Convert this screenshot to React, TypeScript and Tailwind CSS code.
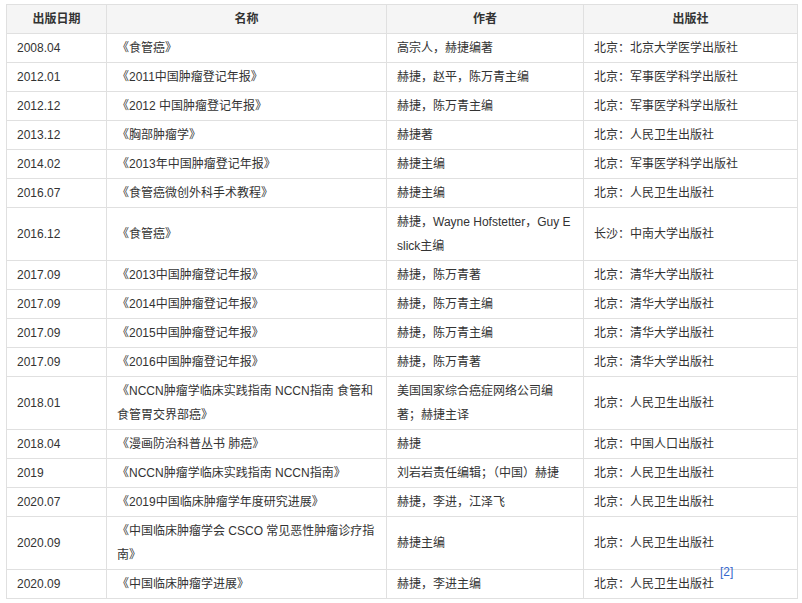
const rows: [string, string, string, string, boolean?][] = [
  ["2008.04", "《食管癌》", "高宗人，赫捷编著", "北京：北京大学医学出版社"],
  ["2012.01", "《2011中国肿瘤登记年报》", "赫捷，赵平，陈万青主编", "北京：军事医学科学出版社"],
  ["2012.12", "《2012 中国肿瘤登记年报》", "赫捷，陈万青主编", "北京：军事医学科学出版社"],
  ["2013.12", "《胸部肿瘤学》", "赫捷著", "北京：人民卫生出版社"],
  ["2014.02", "《2013年中国肿瘤登记年报》", "赫捷主编", "北京：军事医学科学出版社"],
  ["2016.07", "《食管癌微创外科手术教程》", "赫捷主编", "北京：人民卫生出版社"],
  ["2016.12", "《食管癌》", "赫捷，Wayne Hofstetter，Guy Eslick主编", "长沙：中南大学出版社"],
  ["2017.09", "《2013中国肿瘤登记年报》", "赫捷，陈万青著", "北京：清华大学出版社"],
  ["2017.09", "《2014中国肿瘤登记年报》", "赫捷，陈万青主编", "北京：清华大学出版社"],
  ["2017.09", "《2015中国肿瘤登记年报》", "赫捷，陈万青主编", "北京：清华大学出版社"],
  ["2017.09", "《2016中国肿瘤登记年报》", "赫捷，陈万青著", "北京：清华大学出版社"],
  ["2018.01", "《NCCN肿瘤学临床实践指南 NCCN指南 食管和食管胃交界部癌》", "美国国家综合癌症网络公司编著；赫捷主译", "北京：人民卫生出版社"],
  ["2018.04", "《漫画防治科普丛书 肺癌》", "赫捷", "北京：中国人口出版社"],
  ["2019", "《NCCN肿瘤学临床实践指南 NCCN指南》", "刘岩岩责任编辑；（中国）赫捷", "北京：人民卫生出版社"],
  ["2020.07", "《2019中国临床肿瘤学年度研究进展》", "赫捷，李进，江泽飞", "北京：人民卫生出版社"],
  ["2020.09", "《中国临床肿瘤学会 CSCO 常见恶性肿瘤诊疗指南》", "赫捷主编", "北京：人民卫生出版社"],
  ["2020.09", "《中国临床肿瘤学进展》", "赫捷，李进主编", "北京：人民卫生出版社", true],
];

export default function App() {
  const cell = "border border-[#e0e0e0] px-[10px] py-[2px] leading-6 align-middle break-all";
  return (
    <div className="bg-white pl-[6px] pr-[5px] pt-[4px]" style={{ fontFamily: '"Liberation Sans", "Noto Sans CJK SC", sans-serif' }}>
      <table className="w-[791px] border-collapse table-fixed text-[12px] text-[#333]">
        <colgroup>
          <col className="w-[100px]" />
          <col className="w-[280px]" />
          <col className="w-[197px]" />
          <col className="w-[214px]" />
        </colgroup>
        <thead>
          <tr className="bg-[#f5f5f5]">
            {["出版日期", "名称", "作者", "出版社"].map((h) => (
              <th key={h} className="border border-[#e0e0e0] py-[2px] leading-6 font-bold text-center">{h}</th>
            ))}
          </tr>
        </thead>
        <tbody>
          {rows.map((r, i) => (
            <tr key={i}>
              <td className={cell}>{r[0]}</td>
              <td className={cell}>{r[1]}</td>
              <td className={cell}>{r[2]}</td>
              <td className={cell}>
                {r[3]}
                {r[4] && <sup className="ml-[6px] text-[#3366cc] text-[12px] align-[6px]">[2]</sup>}
              </td>
            </tr>
          ))}
        </tbody>
      </table>
    </div>
  );
}
